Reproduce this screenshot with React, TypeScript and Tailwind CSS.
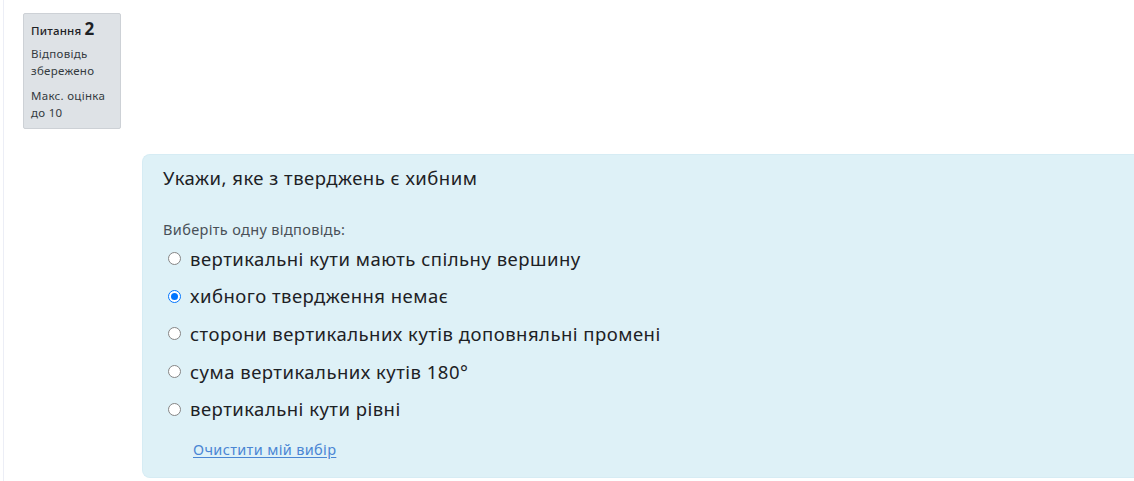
import React from "react";

const options = [
  "вертикальні кути мають спільну вершину",
  "хибного твердження немає",
  "сторони вертикальних кутів доповняльні промені",
  "сума вертикальних кутів 180°",
  "вертикальні кути рівні",
];

function Radio({ checked }: { checked: boolean }) {
  return checked ? (
    <span className="inline-flex h-[13px] w-[13px] items-center justify-center rounded-full border border-[#0075ff] bg-white">
      <span className="h-[7px] w-[7px] rounded-full bg-[#0075ff]" />
    </span>
  ) : (
    <span className="inline-block h-[13px] w-[13px] rounded-full border border-[#858585] bg-white" />
  );
}

export default function App() {
  return (
    <div
      className="min-h-[481px] w-[1134px] overflow-hidden bg-white pl-[3px]"
      style={{ fontFamily: '"Noto Sans", "Open Sans", sans-serif' }}
    >
      <div className="min-h-[481px] border-l border-[#eceef6] pt-[13px]">
        <div className="ml-[19px] w-[98px] rounded-[2px] border border-[#cdd1d6] bg-[#dee2e6] px-[7px] pb-[7px] pt-[5px] text-[#1d2125]">
          <div className="flex items-baseline gap-[3px] leading-[20px]">
            <span className="text-[11.5px] font-medium tracking-[0.2px]">Питання</span>
            <span className="text-[17px] font-bold">2</span>
          </div>
          <div className="mt-[4px] text-[11.5px] leading-[17px] tracking-[0.3px] text-[#343a40]">Відповідь збережено</div>
          <div className="mt-[8px] text-[11.5px] leading-[17px] tracking-[0.3px] text-[#343a40]">Макс. оцінка до 10</div>
        </div>
        <div className="ml-[138px] mt-[25px] rounded-l-[8px] border-y border-l border-[#d6ecf4] bg-[#def1f7] pb-[18px] pl-[20px] pr-[20px] pt-[11px] text-[#1d2125]">
          <div className="text-[18.5px] leading-[24px] tracking-[0.48px]">Укажи, яке з тверджень є хибним</div>
          <div className="mt-[30px] text-[14.5px] leading-[18px] tracking-[0.35px] text-[#495057]">Виберіть одну відповідь:</div>
          <div className="mt-[2px] flex flex-col">
            {options.map((o, i) => (
              <label key={i} className="flex h-[37.6px] items-center">
                <span className="ml-[5px] mr-[9px] flex items-center">
                  <Radio checked={i === 1} />
                </span>
                <span className="text-[18.5px] leading-[24px] tracking-[0.48px]">{o}</span>
              </label>
            ))}
          </div>
          <div className="ml-[30px] mt-[11px] text-[14.5px] leading-[20px] tracking-[0.35px]">
            <a className="text-[#4a86d4] underline underline-offset-2" href="#">
              Очистити мій вибір
            </a>
          </div>
        </div>
      </div>
    </div>
  );
}
